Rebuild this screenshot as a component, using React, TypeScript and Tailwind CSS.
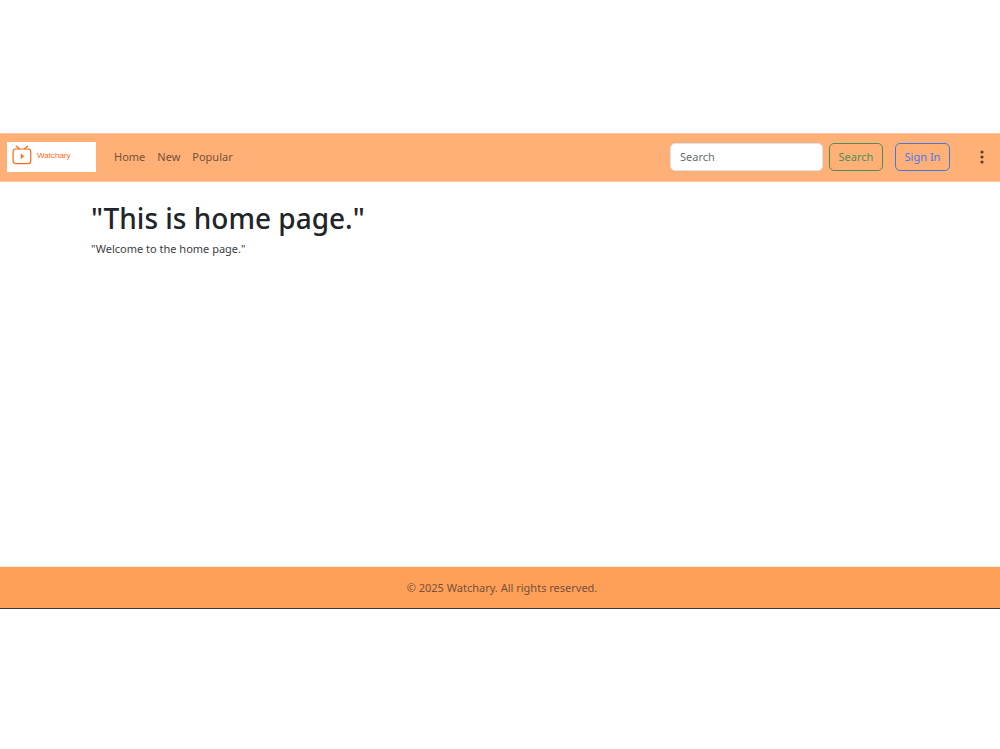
const navLinks = ['Home', 'New', 'Popular'];

function Logo() {
  return (
    <a href="#" className="flex h-[30px] w-[89px] items-center bg-white pl-[5px] text-[#ff6a13]">
      <svg
        viewBox="0 0 20 20"
        className="-mt-1 h-5 w-5"
        fill="none"
        stroke="currentColor"
        strokeWidth="1.2"
        strokeLinecap="round"
        aria-hidden="true"
      >
        <rect x="1.1" y="4" width="17.6" height="14.6" rx="2.6" />
        <path d="M4.4 1.2 7.4 3.8M15.6 1.2 12.6 3.8" />
        <path d="M8.8 8.6v5.4l3.4-2.7z" fill="currentColor" stroke="none" />
      </svg>
      <span className="-mt-0.5 ml-[5px] font-['Liberation_Sans',sans-serif] text-[8px]">Watchary</span>
    </a>
  );
}

function Navbar() {
  return (
    <nav className="flex h-[49px] items-center border-y border-[#ffc69f] bg-[#ffb077] pb-px pl-[7px] text-[11px]">
      <Logo />
      <ul className="ml-[18px] flex gap-3 text-[#75523a]">
        {navLinks.map((label) => (
          <li key={label}>
            <a href="#">{label}</a>
          </li>
        ))}
      </ul>
      <form className="ml-auto flex" onSubmit={(e) => e.preventDefault()}>
        <input
          type="search"
          aria-label="Search"
          placeholder="Search"
          className="mr-1.5 h-7 w-[153px] rounded-[5px] border border-[#dee2e6] bg-white px-[9px] pb-px text-[#212529] placeholder:text-[#6b6e71]"
        />
        <button
          type="submit"
          className="mr-3 h-7 w-[54px] rounded-[5px] border border-[#4b9157] text-[#4b9157]"
        >
          Search
        </button>
      </form>
      <button
        type="button"
        className="h-7 w-[55px] rounded-[5px] border border-[#4679df] text-[#4679ef]"
      >
        Sign In
      </button>
      <button type="button" aria-label="More options" className="mr-[10px] ml-6 h-7 w-4 text-[#603f2a]">
        <svg viewBox="0 0 16 16" className="h-4 w-4" fill="currentColor" aria-hidden="true">
          <circle cx="8" cy="3" r="1.6" />
          <circle cx="8" cy="8" r="1.6" />
          <circle cx="8" cy="13" r="1.6" />
        </svg>
      </button>
    </nav>
  );
}

export default function App() {
  return (
    <div className="flex min-h-screen flex-col bg-white pt-[133px] pb-[140px] font-['Noto_Sans','Open_Sans',sans-serif] text-[#212529]">
      <Navbar />
      <main className="grow px-[91px] pt-[17px]">
        <h1 className="text-[28px] leading-[38px] font-medium">"This is home page."</h1>
        <p className="mt-[3px] text-[11px] leading-[18px] text-[#3d4043]">"Welcome to the home page."</p>
      </main>
      <footer className="flex h-[43px] items-center justify-center border-t border-b border-t-[#f1eeec] border-b-[#3c3733] bg-[#ff9f58] pt-px pl-1 text-[11px] text-[#75523a]">
        © 2025 Watchary. All rights reserved.
      </footer>
    </div>
  );
}
